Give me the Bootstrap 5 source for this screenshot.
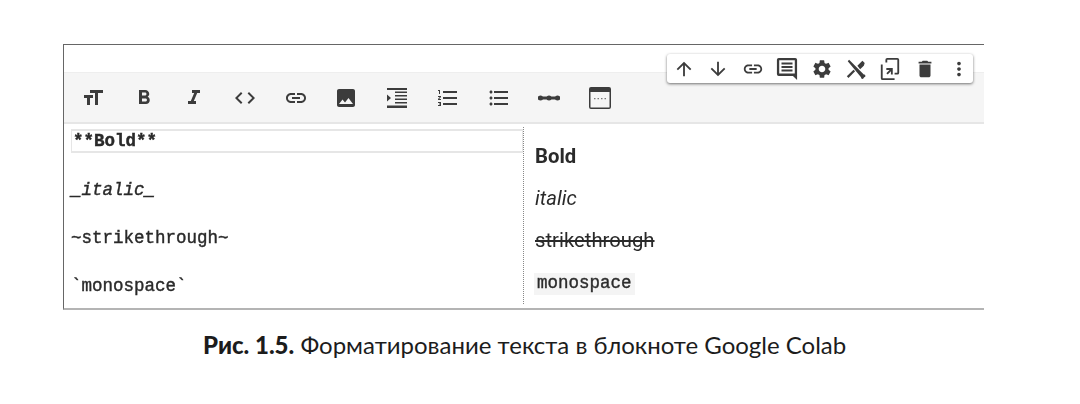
<!doctype html>
<html lang="ru">
<head>
<meta charset="utf-8">
<title>Форматирование текста</title>
<link rel="stylesheet" href="https://cdn.jsdelivr.net/npm/bootstrap@5.3.0/dist/css/bootstrap.min.css">
<style>
html,body{height:404px;overflow:hidden;background:#fff}
.shot{position:relative;width:921px;height:266px;margin:44px 0 0 63px;border-top:1.5px solid #666;border-left:1.5px solid #666;border-bottom:2px solid #b4b4b4;background:#fff;filter:blur(.5px)}
.topgap{height:27px}
.tools{height:52px;background:#f5f5f5;border-top:1px solid #eee;border-bottom:2px solid #e6e6e6;padding-left:17px;gap:26.7px}
.tools svg{width:24px;height:24px;fill:#3c3c3c;flex:none}
.panes{height:184px}
.srcpane{width:459px;padding:5px 0 0 7px;font:400 17.5px/1 "Liberation Mono",monospace;color:#2a2a2a;-webkit-text-stroke:.4px #2a2a2a}
.srcline{height:48px;padding-top:4px;margin-top:1px;margin-bottom:-1px}
.srcline.sel{height:24px;margin:0 0 25px 0;padding:0 0 0 1px;border:2px solid #e6e6e6;border-left-width:1px;border-right-width:1px;line-height:21px;width:452px}
.outpane{border-left:1px dotted #888;margin:3px 0 4px;padding:8px 0 0 11px;font:400 20.3px/1 Roboto,sans-serif;color:#2a2a2a}
.outline{height:42px;display:flex;align-items:center}
.outline:last-child{margin-top:2px}
.monoout{font:400 17.5px/1 "Liberation Mono",monospace;background:#f4f4f4;padding:2px 3px;-webkit-text-stroke:.4px #333;margin-left:-1px}
.floatbar{position:absolute;left:603px;top:9px;width:306px;height:29px;background:#fff;border-radius:3px;box-shadow:0 1px 3px rgba(0,0,0,.55);padding-left:6px;gap:12.4px}
.floatbar svg{width:22px;height:22px;fill:#3c3c3c;flex:none}
.cap{margin:21px 0 0 0;padding-left:203px;font:400 24px/1.2 Lato,"Noto Sans",sans-serif;color:#1c1c1c;white-space:nowrap}
.cap b{font-weight:900}
</style>
</head>
<body>
<div class="shot">
  <div class="topgap"></div>
  <div class="tools d-flex align-items-center">
    <svg viewBox="0 0 24 24"><path d="M9 4v3h5v12h3V7h5V4H9zm-6 8h3v7h3v-7h3V9H3v3z"/></svg>
    <svg viewBox="0 0 24 24"><path d="M15.6 10.79c.97-.67 1.65-1.77 1.65-2.79 0-2.26-1.75-4-4-4H7v14h7.04c2.09 0 3.71-1.7 3.71-3.79 0-1.52-.86-2.82-2.15-3.42zM10 6.5h3c.83 0 1.5.67 1.5 1.5s-.67 1.5-1.5 1.5h-3v-3zm3.5 9H10v-3h3.5c.83 0 1.5.67 1.5 1.5s-.67 1.5-1.5 1.5z"/></svg>
    <svg viewBox="0 0 24 24"><path d="M10 4v3h2.21l-3.42 8H6v3h8v-3h-2.21l3.42-8H18V4z"/></svg>
    <svg viewBox="0 0 24 24"><path d="M9.4 16.6L4.8 12l4.6-4.6L8 6l-6 6 6 6 1.4-1.4zm5.2 0l4.6-4.6-4.6-4.6L16 6l6 6-6 6-1.4-1.4z"/></svg>
    <svg viewBox="0 0 24 24"><path d="M3.9 12c0-1.71 1.39-3.1 3.1-3.1h4V7H7c-2.76 0-5 2.24-5 5s2.24 5 5 5h4v-1.9H7c-1.71 0-3.1-1.39-3.1-3.1zM8 13h8v-2H8v2zm9-6h-4v1.9h4c1.71 0 3.1 1.39 3.1 3.1s-1.39 3.1-3.1 3.1h-4V17h4c2.76 0 5-2.24 5-5s-2.24-5-5-5z"/></svg>
    <svg viewBox="0 0 24 24"><path d="M21 19V5c0-1.1-.9-2-2-2H5c-1.1 0-2 .9-2 2v14c0 1.1.9 2 2 2h14c1.1 0 2-.9 2-2zM8.5 13.5l2.5 3.01L14.5 12l4.5 6H5l3.5-4.500z"/></svg>
    <svg viewBox="0 0 24 24"><path d="M2 22h20v-2.500H2zM2 8.500v7l4-3.500zM10 5.500h12V7H10zM10 9h12v1.500H10zM10 12.500h12V14H10zM10 16h12v1.500H10zM2 2h20v2H2z"/></svg>
    <svg viewBox="0 0 24 24"><path d="M2 17h2v.5H3v1h1v.5H2v1h3v-4H2v1zm1-9h1V4H2v1h1v3zm-1 3h1.8L2 13.1v.9h3v-1H3.2L5 10.9V10H2v1zm5-6v2h14V5H7zm0 14h14v-2H7v2zm0-6h14v-2H7v2z"/></svg>
    <svg viewBox="0 0 24 24"><path d="M4 10.5c-.83 0-1.5.67-1.5 1.5s.67 1.5 1.5 1.5 1.5-.67 1.5-1.5-.67-1.5-1.5-1.5zm0-6c-.83 0-1.5.67-1.5 1.5S3.17 7.5 4 7.5 5.5 6.83 5.5 6 4.83 4.5 4 4.5zm0 12c-.83 0-1.5.68-1.5 1.5s.68 1.5 1.5 1.5 1.5-.68 1.5-1.5-.67-1.5-1.5-1.5zM7 19h14v-2H7v2zm0-6h14v-2H7v2zm0-8v2h14V5H7z"/></svg>
    <svg viewBox="0 0 24 24"><path d="M1 10.500h22v3H1z"/><circle cx="3.500" cy="12" r="2.500"/><circle cx="12" cy="12" r="2.500"/><circle cx="20.500" cy="12" r="2.500"/></svg>
    <svg viewBox="0 0 24 24"><path fill-rule="evenodd" d="M3 1h18a2 2 0 0 1 2 2v18a2 2 0 0 1-2 2H3a2 2 0 0 1-2-2V3a2 2 0 0 1 2-2zm-.5 5v15a.5.5 0 0 0 .5.5h18a.5.5 0 0 0 .5-.5V6z"/><path d="M6 12h1.500v1.200H6zm3.500 0H11v1.200H9.500zm3.500 0h1.500v1.200H13zm3.500 0H18v1.200h-1.500z" fill="#777"/></svg>
  </div>
  <div class="panes d-flex">
    <div class="srcpane">
      <div class="srcline sel"><b>**Bold**</b></div>
      <div class="srcline"><i>_italic_</i></div>
      <div class="srcline">~strikethrough~</div>
      <div class="srcline">`monospace`</div>
    </div>
    <div class="outpane">
      <div class="outline"><b>Bold</b></div>
      <div class="outline"><i>italic</i></div>
      <div class="outline"><s>strikethrough</s></div>
      <div class="outline"><span class="monoout">monospace</span></div>
    </div>
  </div>
  <div class="floatbar d-flex align-items-center">
    <svg viewBox="0 0 24 24"><path d="M4 12l1.410 1.410L11 7.830V20h2V7.830l5.580 5.590L20 12l-8-8-8 8z"/></svg>
    <svg viewBox="0 0 24 24"><path d="M20 12l-1.410-1.410L13 16.170V4h-2v12.170l-5.580-5.590L4 12l8 8 8-8z"/></svg>
    <svg viewBox="0 0 24 24"><path d="M3.900 12c0-1.710 1.390-3.100 3.100-3.100h4V7H7c-2.760 0-5 2.240-5 5s2.240 5 5 5h4v-1.900H7c-1.710 0-3.100-1.390-3.100-3.100zM8 13h8v-2H8v2zm9-6h-4v1.900h4c1.710 0 3.100 1.390 3.100 3.100s-1.390 3.100-3.100 3.100h-4V17h4c2.760 0 5-2.240 5-5s-2.240-5-5-5z"/></svg>
    <svg viewBox="0 0 24 24"><path fill-rule="evenodd" d="M3 0h18a2 2 0 0 1 2 2v22l-4.500-4.500H3a2 2 0 0 1-2-2V2a2 2 0 0 1 2-2zm.5 2.500v14.500h17V2.500z"/><path d="M6 5h12v2.200H6zm0 3.800h12V11H6zm0 3.800h12v2.200H6z"/></svg>
    <svg viewBox="0 0 24 24"><path d="M19.140 12.940c.04-.3.06-.61.06-.94 0-.32-.02-.64-.07-.94l2.030-1.580a.49.49 0 0 0 .12-.61l-1.920-3.320a.488.488 0 0 0-.59-.22l-2.390.96c-.5-.38-1.030-.7-1.620-.94l-.36-2.540a.484.484 0 0 0-.48-.41h-3.840c-.24 0-.43.17-.47.41l-.36 2.540c-.59.24-1.130.57-1.620.94l-2.390-.96c-.22-.08-.47 0-.59.22L2.740 8.870c-.12.21-.08.47.12.61l2.030 1.580c-.05.3-.09.63-.09.94s.02.64.07.94l-2.030 1.580a.49.49 0 0 0-.12.61l1.920 3.320c.12.22.37.29.59.22l2.390-.96c.5.38 1.030.7 1.620.94l.36 2.540c.05.24.24.41.48.41h3.840c.24 0 .44-.17.47-.41l.36-2.540c.59-.24 1.130-.56 1.620-.94l2.390.96c.22.08.47 0 .59-.22l1.920-3.320c.12-.22.07-.47-.12-.61l-2.010-1.580zM12 15.600c-1.980 0-3.600-1.620-3.600-3.600s1.620-3.600 3.600-3.600 3.600 1.620 3.600 3.600-1.620 3.600-3.600 3.600z"/></svg>
    <svg viewBox="0 0 24 24"><path d="M3 3.500L4.500 2 20.500 18a1.100 1.100 0 0 1 .5 3l-.7.7a1.100 1.100 0 0 1-2.800-.7z"/><path d="M2 20l1.800 1.800L11 14.500 9.300 12.800z"/><path d="M13.500 8.500L19 3l2.500 2.500-1 3-4 3.800z"/></svg>
    <svg viewBox="0 0 24 24"><path d="M9 0h11a2 2 0 0 1 2 2v14a2 2 0 0 1-2 2h-3v-2h3V2H9v3H7V2a2 2 0 0 1 2-2z"/><path d="M2 7h2v15h13v2H4a2 2 0 0 1-2-2z"/><path d="M8 11h7v7h-2v-3.500l-3.500 3.500L8 16.500l3.500-3.500H8z"/></svg>
    <svg viewBox="0 0 24 24"><path d="M6 19c0 1.100.9 2 2 2h8c1.100 0 2-.9 2-2V7H6v12zM19 4h-3.500l-1-1h-5l-1 1H5v2h14V4z"/></svg>
    <svg viewBox="0 0 24 24"><path d="M12 8c1.100 0 2-.9 2-2s-.9-2-2-2-2 .9-2 2 .9 2 2 2zm0 2c-1.100 0-2 .9-2 2s.9 2 2 2 2-.9 2-2-.9-2-2-2zm0 6c-1.100 0-2 .9-2 2s.9 2 2 2 2-.9 2-2-.9-2-2-2z"/></svg>
  </div>
</div>
<p class="cap"><b>Рис. 1.5.</b> Форматирование текста в блокноте Google Colab</p>
</body>
</html>
